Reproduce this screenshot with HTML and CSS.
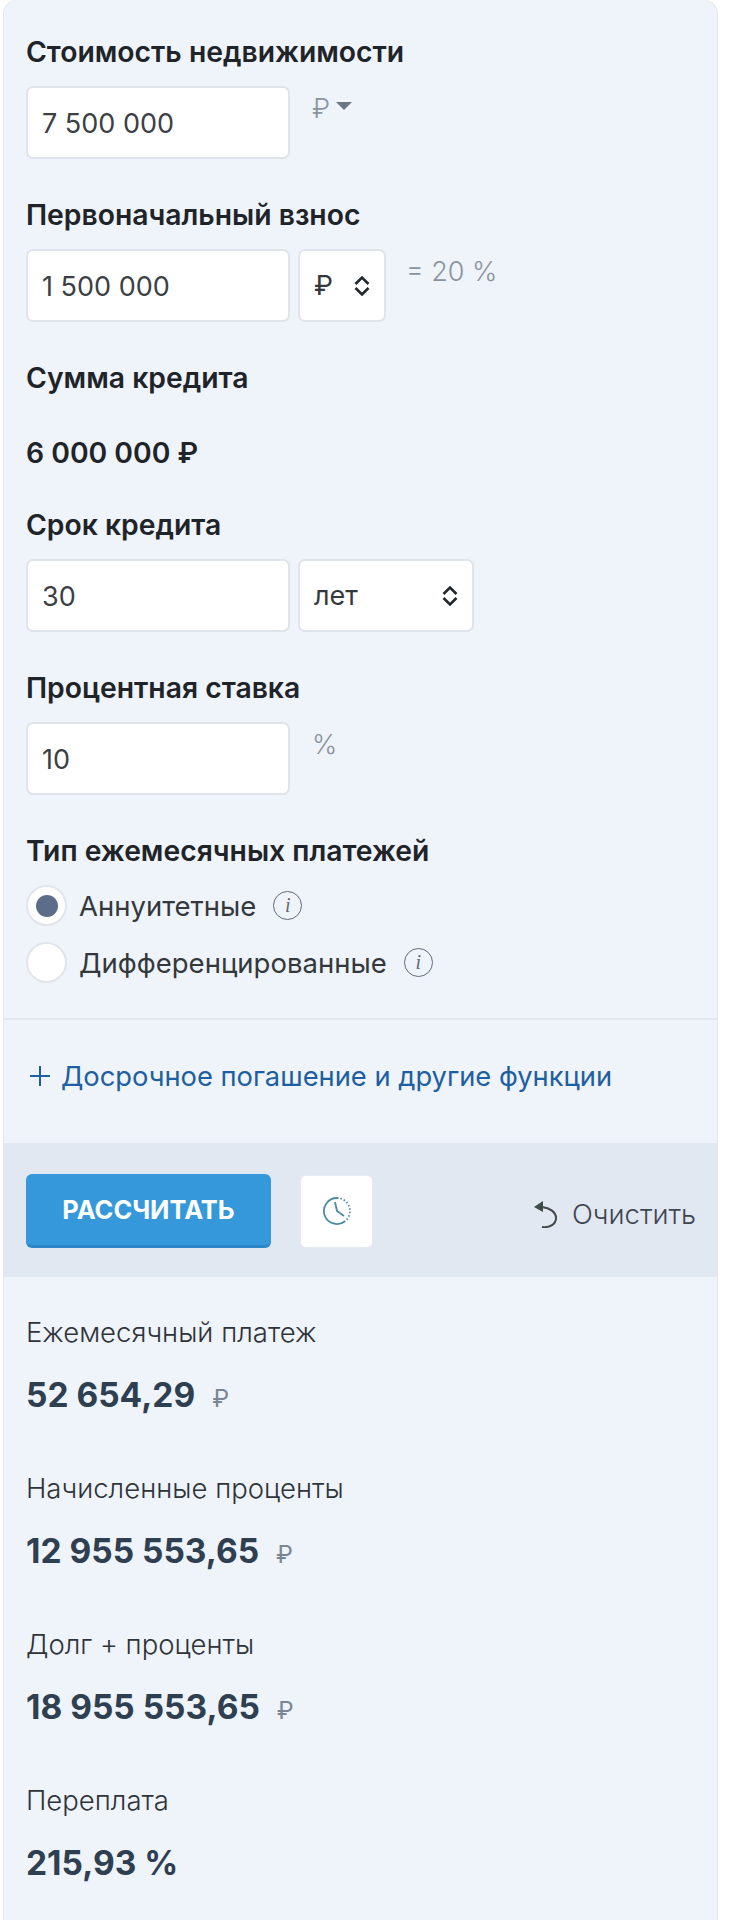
FILE: index.html
```html
<!DOCTYPE html>
<html lang="ru">
<head>
    <meta charset="UTF-8">
    <meta name="viewport" content="width=device-width, initial-scale=1.0">
    <title>Ипотечный калькулятор</title>
    <link rel="stylesheet" href="styles.css">
</head>
<body>
    <main class="calc">
        <section class="form">
            <div class="field">
                <div class="label">Стоимость недвижимости</div>
                <div class="row">
                    <input class="input" type="text" value="7 500 000">
                    <span class="unit">₽</span>
                    <span class="caret"></span>
                </div>
            </div>

            <div class="field">
                <div class="label">Первоначальный взнос</div>
                <div class="row">
                    <input class="input" type="text" value="1 500 000">
                    <div class="select select-short">
                        <span>₽</span>
                        <svg class="chevrons" viewBox="0 0 16 22"><path d="M1.5 9L8 2.5 14.5 9M1.5 13L8 19.5 14.5 13"/></svg>
                    </div>
                    <span class="unit unit-share">= 20 %</span>
                </div>
            </div>

            <div class="field">
                <div class="label label-static">Сумма кредита</div>
                <div class="label">6 000 000 ₽</div>
            </div>

            <div class="field">
                <div class="label">Срок кредита</div>
                <div class="row">
                    <input class="input" type="text" value="30">
                    <div class="select select-long">
                        <span>лет</span>
                        <svg class="chevrons" viewBox="0 0 16 22"><path d="M1.5 9L8 2.5 14.5 9M1.5 13L8 19.5 14.5 13"/></svg>
                    </div>
                </div>
            </div>

            <div class="field">
                <div class="label">Процентная ставка</div>
                <div class="row">
                    <input class="input" type="text" value="10">
                    <span class="unit">%</span>
                </div>
            </div>

            <div class="label">Тип ежемесячных платежей</div>
            <div class="radios">
                <div class="radio-row">
                    <span class="radio radio-on"></span>
                    <span>Аннуитетные</span>
                    <span class="info">i</span>
                </div>
                <div class="radio-row">
                    <span class="radio"></span>
                    <span>Дифференцированные</span>
                    <span class="info">i</span>
                </div>
            </div>
        </section>

        <a class="more" href="#">
            <svg class="plus" viewBox="0 0 22 22"><path d="M11 1v20M1 11h20"/></svg>
            Досрочное погашение и другие функции
        </a>

        <div class="actions">
            <button class="btn-calc" type="button">РАССЧИТАТЬ</button>
            <button class="btn-history" type="button">
                <svg viewBox="0 0 30 30" width="30" height="30">
                    <path class="clock-solid" d="M15 2A13 13 0 1 0 23 25.2"/>
                    <path class="clock-dots" d="M15 2A13 13 0 0 1 23 25.2"/>
                    <path class="clock-hands" d="M13 6l2 9 7 5"/>
                </svg>
            </button>
            <a class="clear" href="#">
                <svg viewBox="0 0 24 28" width="24" height="28">
                    <path class="undo-head" d="M0 7l9-6v11z"/>
                    <path class="undo-arc" d="M8 7c8 1 14 5 14 11s-6 10-14 9"/>
                </svg>
                Очистить
            </a>
        </div>

        <section class="results">
            <div class="result">
                <div class="result-name">Ежемесячный платеж</div>
                <div class="result-value">52 654,29 <span class="rub">₽</span></div>
            </div>
            <div class="result">
                <div class="result-name">Начисленные проценты</div>
                <div class="result-value">12 955 553,65 <span class="rub">₽</span></div>
            </div>
            <div class="result">
                <div class="result-name">Долг + проценты</div>
                <div class="result-value">18 955 553,65 <span class="rub">₽</span></div>
            </div>
            <div class="result">
                <div class="result-name">Переплата</div>
                <div class="result-value">215,93 %</div>
            </div>
        </section>
    </main>
</body>
</html>
```

FILE: styles.css
```css
* {
    margin: 0;
    padding: 0;
    box-sizing: border-box;
}
body {
    font-family: Inter, "Noto Sans", sans-serif;
    font-size: 27.5px;
    color: #33383d;
    background: #fff;
}
.calc {
    width: 715px;
    min-height: 1920px;
    margin-left: 3px;
    background: #eff3fa;
    border-radius: 14px 14px 0 0;
    box-shadow: inset 1px 0 0 #e3e7ee, inset -1px 0 0 #e3e7ee;
}
.form {
    padding: 37px 23px 35px;
    border-bottom: 2px solid #e1e5ec;
}
.field {
    margin-bottom: 41px;
}
.label {
    font-size: 28.3px;
    font-weight: 600;
    line-height: 31px;
    color: #1e2429;
}
.label-static {
    margin-bottom: 44px;
}
.field > .label:first-child:not(.label-static),
.form > .label {
    margin-bottom: 18px;
}
.row {
    display: flex;
    align-items: flex-start;
}
.input {
    width: 264px;
    height: 73px;
    padding: 2px 14px 0;
    font: 400 27px Inter, sans-serif;
    color: #3b4046;
    background: #fff;
    border: 2px solid #dfe3ea;
    border-radius: 7px;
}
.select {
    display: flex;
    align-items: center;
    justify-content: space-between;
    height: 73px;
    margin-left: 8px;
    padding: 0 14px;
    font-size: 27px;
    color: #33383d;
    background: #fff;
    border: 2px solid #dfe3ea;
    border-radius: 7px;
}
.select-short {
    width: 88px;
}
.select-long {
    width: 176px;
}
.chevrons {
    width: 16px;
    height: 22px;
}
.chevrons path {
    fill: none;
    stroke: #22272b;
    stroke-width: 2.6;
}
.unit {
    margin: 7px 0 0 22px;
    font-size: 27px;
    font-weight: 300;
    line-height: 32px;
    color: #8a94a0;
}
.unit-share {
    margin-left: 20px;
}
.caret {
    width: 0;
    height: 0;
    margin: 16px 0 0 6px;
    border-left: 8px solid transparent;
    border-right: 8px solid transparent;
    border-top: 8px solid #6b7785;
}
.radios {
    display: flex;
    flex-direction: column;
    gap: 16px;
}
.radio-row {
    display: flex;
    align-items: center;
    gap: 12px;
    font-weight: 400;
    color: #33383d;
}
.radio {
    display: flex;
    align-items: center;
    justify-content: center;
    width: 41px;
    height: 41px;
    background: #fff;
    border: 2px solid #e1e5eb;
    border-radius: 50%;
}
.radio-on::after {
    content: "";
    width: 22px;
    height: 22px;
    background: #5c6d89;
    border-radius: 50%;
}
.info {
    width: 29px;
    height: 29px;
    margin-left: 5px;
    font: italic 20px/26px "Liberation Serif", serif;
    text-align: center;
    color: #5f6b7a;
    border: 1.5px solid #5f6b7a;
    border-radius: 50%;
}
.more {
    display: flex;
    align-items: center;
    gap: 10px;
    height: 123px;
    padding: 0 0 11px 26px;
    font-size: 27.3px;
    color: #1d5fa0;
    text-decoration: none;
}
.plus {
    width: 22px;
    height: 22px;
}
.plus path {
    fill: none;
    stroke: #1d5fa0;
    stroke-width: 2;
}
.actions {
    display: flex;
    align-items: center;
    height: 134px;
    padding: 2px 22px 0 23px;
    background: #e1e8f2;
}
.btn-calc {
    width: 245px;
    height: 74px;
    font: 700 25.4px Inter, sans-serif;
    color: #fff;
    background: #3498db;
    border: 0;
    border-bottom: 3px solid #2d86c8;
    border-radius: 6px;
}
.btn-history {
    display: flex;
    align-items: center;
    justify-content: center;
    width: 73px;
    height: 73px;
    margin-left: 29px;
    background: #fff;
    border: 1px solid #e6eaf1;
    border-radius: 6px;
}
.clock-solid,
.clock-dots,
.clock-hands {
    fill: none;
    stroke: #4b8aa5;
    stroke-width: 1.8;
}
.clock-dots {
    stroke-dasharray: 1.5 2;
}
.clear {
    display: flex;
    align-items: center;
    gap: 14px;
    margin-left: auto;
    padding-top: 5px;
    font-weight: 300;
    color: #3f4650;
    text-decoration: none;
}
.undo-head {
    fill: #3f4a4a;
}
.undo-arc {
    fill: none;
    stroke: #3f4a4a;
    stroke-width: 2;
}
.results {
    padding: 39px 23px 0;
}
.result {
    margin-bottom: 55px;
}
.result-name {
    font-weight: 300;
    line-height: 32px;
    color: #2e343b;
}
.result-value {
    margin-top: 25px;
    font-size: 33.5px;
    font-weight: 700;
    line-height: 44px;
    color: #2e3f52;
}
.rub {
    margin-left: 9px;
    font-size: 24px;
    font-weight: 400;
    line-height: 1;
    color: #7a8694;
}
```
